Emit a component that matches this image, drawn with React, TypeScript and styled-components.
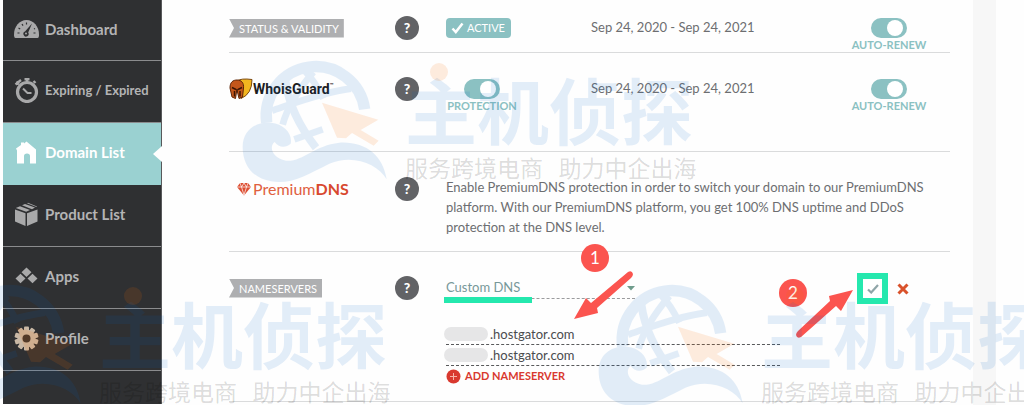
import React from 'react';
import styled, { createGlobalStyle } from 'styled-components';

const teal = '#8bc1c2';
const alertRed = '#fb544f';

const GlobalStyle = createGlobalStyle`
  *, *::before, *::after { box-sizing: border-box; }
  body {
    margin: 0;
    background: #fefefe;
    color: #6d6e71;
    font: 13px/20px Lato, "Liberation Sans", sans-serif;
  }
  button, input, select { font: inherit; color: inherit; }
`;

const Page = styled.div`
  position: relative;
  display: flex;
  min-height: 100vh;
  overflow: hidden;
  padding: 0 28px 0 3px;
`;

const Sidebar = styled.nav`
  flex: 0 0 159px;
  background: #2f3032;
  margin-bottom: 1px;
  border-right: 1px solid #58595b;
`;

const NavItem = styled.a<{ $active?: boolean; $small?: boolean }>`
  position: relative;
  display: flex;
  align-items: center;
  gap: 6px;
  height: 62px;
  padding: 0 0 3px 10px;
  border-bottom: 1px solid ${p => (p.$active ? '#9ad1d1' : '#8b8c8e')};
  background: ${p => (p.$active ? '#9ad1d1' : 'transparent')};
  color: ${p => (p.$active ? '#fff' : '#b4b4b5')};
  font-size: ${p => (p.$small ? 13 : 15)}px;
  font-weight: 700;
  text-decoration: none;
  white-space: nowrap;

  &:first-child { height: 61px; }

  &::after {
    content: '';
    display: ${p => (p.$active ? 'block' : 'none')};
    position: absolute;
    right: -1px;
    top: 23px;
    border: solid transparent;
    border-width: 8px 9px 8px 0;
    border-right-color: #fefefe;
  }

  svg { flex: none; }
`;

const Main = styled.main`
  flex: 1;
  min-width: 0;
  padding: 0 23px 0 67px;
`;

const Gutter = styled.div`
  flex: 0 0 23px;
  background: #f7f7f7;
`;

const Row = styled.section<{ $height: number; $top: number }>`
  position: relative;
  display: grid;
  grid-template-columns: 166px 51px 1fr;
  align-items: start;
  min-height: ${p => p.$height}px;
  padding: ${p => p.$top}px 25px 0 0;
  border-bottom: 1px solid #dadbdc;
`;

const LabelCell = styled.div`
  display: flex;
  align-items: center;
  height: 24px;
`;

const Ribbon = styled.h2`
  margin: 0;
  padding: 0 5px 0 10px;
  background: #aeafb1;
  clip-path: polygon(0 0, 100% 0, 100% 100%, 0 100%, 5px 50%);
  color: #fff;
  font-size: 11px;
  font-weight: 400;
  line-height: 19px;
  white-space: nowrap;
`;

const Help = styled.button`
  width: 24px;
  height: 24px;
  padding: 0;
  border: 0;
  border-radius: 50%;
  background: #626366;
  color: #fff;
  font-size: 14px;
  font-weight: 900;
  line-height: 24px;
  text-align: center;
`;

const Details = styled.div`
  display: grid;
  grid-template-columns: 145px 1fr 72px;
  align-items: start;
`;

const ActiveBadge = styled.span`
  display: flex;
  align-items: center;
  gap: 3px;
  width: 65px;
  height: 20px;
  margin-top: 2px;
  padding-left: 5px;
  border-radius: 4px;
  background: ${teal};
  color: #fff;
  font-size: 11px;
`;

const Dates = styled.span`
  line-height: 23px;
`;

const ToggleLabel = styled.label`
  display: flex;
  flex-direction: column;
  align-items: center;
  width: 72px;
  padding-top: 2px;
  color: ${teal};
  font-size: 11px;
  font-weight: 700;
  line-height: 13px;
  white-space: nowrap;
`;

const ToggleInput = styled.input`
  appearance: none;
  display: flex;
  justify-content: flex-end;
  width: 36px;
  height: 20px;
  margin: 0;
  padding: 2px 4px 2px 2px;
  border-radius: 10px;
  background: ${teal};

  &::before {
    content: '';
    width: 16px;
    height: 16px;
    border-radius: 50%;
    background: #fff;
  }
`;

const WhoisLogo = styled.div`
  display: flex;
  align-items: center;
  color: #1d1d1f;
  font: 700 14px/24px Roboto, "Liberation Sans", sans-serif;

  sup { font-size: 6px; line-height: 6px; align-self: flex-start; margin-top: 5px; }
`;

const PremiumLogo = styled.div`
  display: flex;
  align-items: center;
  gap: 2px;
  padding-left: 8px;
  color: #e0603f;
  font-size: 16px;
  line-height: 24px;

  b { color: #d8492f; }
`;

const Description = styled.p`
  margin: 0;
  max-width: 482px;
  line-height: 20px;
`;

const DnsForm = styled.form`
  display: grid;
  grid-template-columns: 1fr auto;
  align-items: start;
`;

const SelectWrap = styled.div`
  position: relative;
  width: 189px;
  border-bottom: 1px dashed #9a9b9d;

  &::after {
    content: '';
    position: absolute;
    left: -2px;
    bottom: -5px;
    width: 88px;
    height: 6px;
    background: #25e8ae;
  }

  svg { position: absolute; right: 0; top: 10px; }
`;

const Select = styled.select`
  display: block;
  appearance: none;
  width: 100%;
  height: 22px;
  padding: 0;
  border: 0;
  background: transparent;
  color: #779899;
`;

const Actions = styled.div`
  display: flex;
  align-items: center;
  gap: 9px;
  margin: -3px 16px 0 0;
`;

const ConfirmButton = styled.button`
  display: flex;
  align-items: center;
  justify-content: center;
  width: 31px;
  height: 31px;
  padding: 0;
  border: 6px solid #25e8ae;
  background: #fff;
`;

const PlainButton = styled.button`
  display: flex;
  align-items: center;
  padding: 0;
  border: 0;
  background: transparent;
`;

const Servers = styled.div`
  width: 334px;
  margin-top: 25px;
`;

const ServerField = styled.label`
  display: flex;
  align-items: center;
  height: 21px;
  border-bottom: 1px dashed #58595b;
`;

const Redaction = styled.span`
  flex: 0 0 44px;
  height: 14px;
  margin-left: -2px;
  border-radius: 7px;
  background: #e6e6e7;
`;

const ServerInput = styled.input`
  flex: 1;
  min-width: 0;
  height: 20px;
  padding: 0 0 0 2px;
  border: 0;
  background: transparent;
  color: #4b4c4e;
`;

const AddButton = styled(PlainButton)`
  gap: 4px;
  margin-top: 2px;
  color: #d9392f;
  font-size: 11px;
  font-weight: 700;
  line-height: 16px;
`;

const Step = styled.span<{ $side: 'left' | 'right'; $x: number; $y: number }>`
  position: absolute;
  ${p => p.$side}: ${p => p.$x}px;
  top: ${p => p.$y}px;
  width: 28px;
  height: 28px;
  border-radius: 50%;
  background: ${alertRed};
  color: #fff;
  font-size: 17px;
  line-height: 28px;
  text-align: center;
`;

const StepArrow = styled.svg<{ $side: 'left' | 'right'; $x: number; $y: number }>`
  position: absolute;
  ${p => p.$side}: ${p => p.$x}px;
  top: ${p => p.$y}px;
  fill: ${alertRed};
  pointer-events: none;
`;

const Mark = styled.div<{ $x: number; $y: number }>`
  position: absolute;
  left: ${p => p.$x}px;
  top: ${p => p.$y}px;
  display: flex;
  gap: 9px;
  width: 460px;
  pointer-events: none;

  svg { flex: none; }
`;

const MarkText = styled.div`
  position: relative;
  padding-top: 16px;
  font-family: "Noto Sans CJK SC", sans-serif;
  white-space: pre;
`;

const MarkName = styled.div`
  color: rgba(0, 100, 200, 0.11);
  font-size: 72px;
  font-weight: 700;
  line-height: 80px;
`;

const MarkDot = styled.span`
  position: absolute;
  left: 25px;
  top: 11px;
  width: 18px;
  height: 18px;
  border-radius: 50%;
  background: rgba(250, 110, 0, 0.13);
`;

const MarkLine = styled.div`
  color: rgba(0, 0, 0, 0.15);
  font-size: 23px;
  line-height: 38px;
`;

function Watermark({ x, y }: { x: number; y: number }) {
  return (
    <Mark $x={x} $y={y} aria-hidden="true">
      <svg width="160" height="136" viewBox="0 0 480 408" fill="none">
        <g opacity="0.11" stroke="#0064c8" fill="none">
          <path d="M92 212A148 148 0 1 1 386 172" strokeWidth="34" />
          <path d="M148 85C158 160 195 230 240 287" strokeWidth="24" />
          <path d="M232 60C190 110 155 160 140 218M205 55C225 75 245 105 262 140" strokeWidth="20" />
          <path d="M108 176C170 155 260 120 345 110" strokeWidth="20" />
          <path d="M175 262L260 232" strokeWidth="20" />
          <path
            stroke="none"
            fill="#0064c8"
            d="M20 285C20 235 60 208 105 212C145 216 170 245 164 275C150 288 128 288 116 270C100 280 104 318 150 326C200 330 235 280 310 272C390 268 440 310 452 382C425 335 350 305 280 335C210 370 165 398 105 388C50 378 20 340 20 285Z"
          />
        </g>
        <path fill="#fa6e00" opacity="0.13" d="M258 152L427 203L374 234L428 266L413 281L348 243L330 259L303 257Z" />
      </svg>
      <MarkText>
        <MarkDot />
        <MarkName>主机侦探</MarkName>
        <MarkLine>服务跨境电商   助力中企出海</MarkLine>
      </MarkText>
    </Mark>
  );
}

const icon = { width: 26, height: 26, viewBox: '0 0 26 26', 'aria-hidden': true } as const;

const GaugeIcon = () => (
  <svg {...icon} fill="#a9a9aa">
    <path d="M2.500 22Q1 22 1 18.500C1 10.500 6.500 4 13.500 4S26 10.500 26 18.500Q26 22 24.500 22Z" />
    <path d="M19 7.500L15.200 16.500A2.600 2.600 0 1 1 12 15.500Z" fill="#2f3032" />
    <path d="M4.500 17H6.500M5.500 12L7.200 13M9 8L10 9.600M13.500 6.500V8.500M21 13L22 12.400M20.500 17H22.500" stroke="#2f3032" strokeWidth="1.200" />
    <circle cx="13" cy="17.500" r="1" />
  </svg>
);
const ClockIcon = () => (
  <svg {...icon} fill="none" stroke="#a9a9aa">
    <circle cx="14" cy="15" r="9.500" strokeWidth="3.200" />
    <path d="M14 2V5M11.500 2.200H16.500M2.500 7.500L8 3M3.500 4.500L6 7.500M20.500 4L22.500 6" strokeWidth="2.400" />
    <path d="M10 11.500L14.500 16H18.500" strokeWidth="2" />
  </svg>
);
const HouseIcon = () => (
  <svg {...icon} fill="#fff">
    <path d="M4 24.500V11.500L3 9.500L8 6V3.500H11V4.500L13.500 2.500L23 10.500V24.500H17V17Q17 14.500 14 14.500T11 17V24.500Z" />
  </svg>
);
const BoxIcon = () => (
  <svg {...icon} fill="#a9a9aa">
    <path d="M2 8.500L12.500 12.300V25L2 20.500ZM14 12.300L24.500 8.500V20.500L14 25ZM2.800 7L7 5.200L17 9L13.200 10.700ZM9 4.300L12 2.900L22 6.500L19 8.200ZM14 2.200L15 1.800L24 5.600L23.500 6Z" />
  </svg>
);
const AppsIcon = () => (
  <svg {...icon} fill="#a9a9aa">
    <path d="M13.500 4.500L18.500 9.300L13.500 14.100L8.500 9.300ZM7.500 10.700L12.500 15.500L7.500 20.300L2.500 15.500ZM19.500 10.700L24.500 15.500L19.500 20.300L14.500 15.500Z" />
  </svg>
);
const GearIcon = () => (
  <svg {...icon}>
    <g fill="#c9b8a5">
      {[0, 36, 72, 108, 144].map(a => (
        <rect key={a} x="11" y="1.500" width="5" height="24" rx="1" transform={`rotate(${a} 13.500 13.500)`} />
      ))}
      <circle cx="13.500" cy="13.500" r="9" />
    </g>
    <circle cx="13.500" cy="13.500" r="4" fill="#3a332e" />
  </svg>
);

const nav = [
  { label: 'Dashboard', Icon: GaugeIcon },
  { label: 'Expiring / Expired', Icon: ClockIcon, small: true },
  { label: 'Domain List', Icon: HouseIcon, active: true },
  { label: 'Product List', Icon: BoxIcon },
  { label: 'Apps', Icon: AppsIcon },
  { label: 'Profile', Icon: GearIcon },
];

function Toggle({ text }: { text: string }) {
  return (
    <ToggleLabel>
      <ToggleInput type="checkbox" role="switch" defaultChecked />
      {text}
    </ToggleLabel>
  );
}

const HelpButton = () => <Help type="button" aria-label="Help">?</Help>;

export default function App() {
  return (
    <>
      <GlobalStyle />
      <Page>
        <Sidebar>
          {nav.map(({ label, Icon, active, small }) => (
            <NavItem key={label} href="#" $active={active} $small={small}>
              <Icon />
              {label}
            </NavItem>
          ))}
        </Sidebar>

        <Main>
          <Row $height={53} $top={16}>
            <LabelCell><Ribbon>STATUS &amp; VALIDITY</Ribbon></LabelCell>
            <HelpButton />
            <Details>
              <ActiveBadge>
                <svg width="13" height="12" viewBox="0 0 13 12" fill="none" stroke="#fff" strokeWidth="2.500" aria-hidden="true">
                  <path d="M1.500 6.500L4.800 10L11.500 1.500" />
                </svg>
                ACTIVE
              </ActiveBadge>
              <Dates>Sep 24, 2020 - Sep 24, 2021</Dates>
              <Toggle text="AUTO-RENEW" />
            </Details>
          </Row>

          <Row $height={99} $top={24}>
            <LabelCell>
              <WhoisLogo>
                <svg width="24" height="22" viewBox="0 0 24 22" aria-hidden="true">
                  <path d="M8 3Q12 0 23 1.500Q23 16 12 20.500Z" fill="#f2b61f" stroke="#7d4a12" />
                  <path d="M1 10C1 4 4 2 8 2C12.500 2 15 5 14.500 10L13.500 19L10 20.500L8.500 14H7.500L6.500 20.500L3 19Z" fill="#c4571b" stroke="#5f2608" />
                  <path d="M3 9.500L7 11.500M13 9.500L9 11.500M8 11V14M5.500 13V18.500M11 13V18.500" stroke="#3c1604" strokeWidth="1.500" />
                </svg>
                WhoisGuard<sup>™</sup>
              </WhoisLogo>
            </LabelCell>
            <HelpButton />
            <Details>
              <Toggle text="PROTECTION" />
              <Dates>Sep 24, 2020 - Sep 24, 2021</Dates>
              <Toggle text="AUTO-RENEW" />
            </Details>
          </Row>

          <Row $height={100} $top={25}>
            <LabelCell>
              <PremiumLogo>
                <svg width="14" height="14" viewBox="0 0 14 14" aria-hidden="true">
                  <path d="M3 1H11L14 5L7 13.500L0 5Z" fill="#dd4f33" />
                  <path d="M0 5H14M3 1L4.500 5L7 13M11 1L9.500 5L7 13M4.500 5L7 1L9.500 5" stroke="#fff" strokeWidth="0.700" fill="none" />
                </svg>
                <span>Premium<b>DNS</b></span>
              </PremiumLogo>
            </LabelCell>
            <HelpButton />
            <Description>
              Enable PremiumDNS protection in order to switch your domain to our PremiumDNS platform. With our
              PremiumDNS platform, you get 100% DNS uptime and DDoS protection at the DNS level.
            </Description>
          </Row>

          <Row $height={150} $top={24}>
            <LabelCell><Ribbon>NAMESERVERS</Ribbon></LabelCell>
            <HelpButton />
            <DnsForm onSubmit={e => e.preventDefault()}>
              <div>
                <SelectWrap>
                  <Select aria-label="Nameserver type" defaultValue="Custom DNS">
                    <option>Custom DNS</option>
                  </Select>
                  <svg width="8" height="5" viewBox="0 0 8 5" fill="#6f9c8c" aria-hidden="true">
                    <path d="M0 0H8L4 4.500Z" />
                  </svg>
                </SelectWrap>
                <Servers>
                  {[1, 2].map(n => (
                    <ServerField key={n}>
                      <Redaction />
                      <ServerInput aria-label={`Nameserver ${n}`} defaultValue=".hostgator.com" />
                    </ServerField>
                  ))}
                </Servers>
                <AddButton type="button">
                  <svg width="15" height="15" viewBox="0 0 15 15" aria-hidden="true">
                    <circle cx="7.500" cy="7.500" r="7" fill="#d9392f" />
                    <path d="M4 7.500H11M7.500 4V11" stroke="#f6b3a9" />
                  </svg>
                  ADD NAMESERVER
                </AddButton>
              </div>
              <Actions>
                <ConfirmButton type="submit" aria-label="Save">
                  <svg width="12" height="10" viewBox="0 0 12 10" fill="none" stroke="#8fa5a8" strokeWidth="2.200" aria-hidden="true">
                    <path d="M1 5.500L4.200 8.500L11 1" />
                  </svg>
                </ConfirmButton>
                <PlainButton type="button" aria-label="Cancel">
                  <svg width="12" height="12" viewBox="0 0 12 12" stroke="#d9522b" strokeWidth="3" aria-hidden="true">
                    <path d="M1.500 1.500L10.500 10.500M10.500 1.500L1.500 10.500" />
                  </svg>
                </PlainButton>
              </Actions>
            </DnsForm>
            <Step $side="left" $x={352} $y={-8}>1</Step>
            <StepArrow $side="left" $x={345} $y={19} width="60" height="50" viewBox="0 0 60 50">
              <path d="M0 48L12 27L17 32L54 1Q58 -1 59 3Q59 5 57 7L23 37L24 42Z" />
            </StepArrow>
            <Step $side="right" $x={143} $y={27}>2</Step>
            <StepArrow $side="right" $x={96} $y={37} width="60" height="50" viewBox="0 0 60 50">
              <path d="M59 1L47 22L42 17L7 48Q3 50 2 46Q2 44 4 42L36 12L35 7Z" />
            </StepArrow>
          </Row>
        </Main>

        <Gutter />
        <Watermark x={236} y={52} />
        <Watermark x={-70} y={276} />
        <Watermark x={592} y={276} />
      </Page>
    </>
  );
}
